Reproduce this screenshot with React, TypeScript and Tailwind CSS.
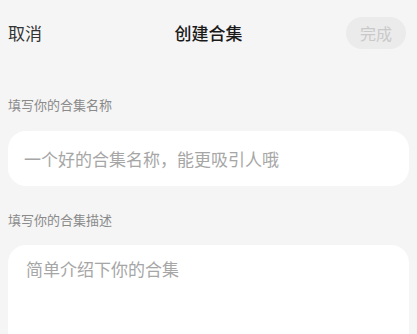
export default function App() {
  return (
    <div
      className="h-[334px] w-[417px] overflow-hidden bg-[#f5f5f5]"
      style={{ fontFamily: '"Noto Sans CJK SC", "Noto Sans", sans-serif' }}
    >
      {/* Header */}
      <div className="relative flex h-[66px] items-center justify-between px-2">
        <span className="text-[17px] text-[#333333]">取消</span>
        <span className="absolute left-1/2 -translate-x-1/2 text-[17px] font-medium text-[#1a1a1a]">
          创建合集
        </span>
        <button className="mr-[3px] flex h-[32px] w-[60px] items-center justify-center rounded-full bg-[#ebebeb] text-[16px] text-[#c9c9c9]">
          完成
        </button>
      </div>

      {/* Name */}
      <div className="px-2">
        <div className="mt-[30px] text-[13px] leading-[18px] text-[#8a8a8a]">填写你的合集名称</div>
        <div className="mt-[17px] flex h-[55px] items-center rounded-[18px] bg-white px-4">
          <span className="text-[17px] text-[#a6a6a6]">一个好的合集名称，能更吸引人哦</span>
        </div>

        {/* Description */}
        <div className="mt-[25px] text-[13px] leading-[18px] text-[#8a8a8a]">填写你的合集描述</div>
        <div className="mt-[16px] h-[120px] rounded-[18px] bg-white px-[18px] pt-[11px]">
          <span className="text-[17px] text-[#a6a6a6]">简单介绍下你的合集</span>
        </div>
      </div>
    </div>
  );
}
